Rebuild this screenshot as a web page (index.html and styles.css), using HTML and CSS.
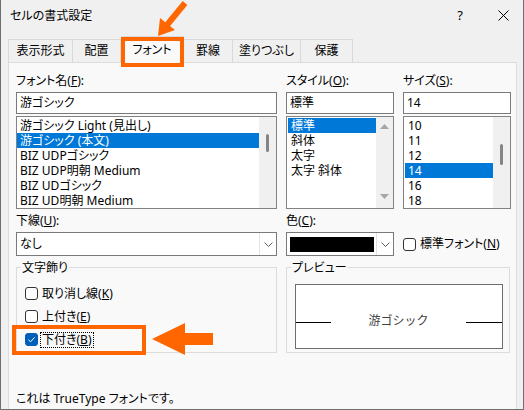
FILE: index.html
```html
<!DOCTYPE html>
<html lang="ja">
<head>
<meta charset="utf-8">
<title>セルの書式設定</title>
<link rel="stylesheet" href="styles.css">
</head>
<body>
<div class="window">
  <div class="titlebar">
    <span class="title">セルの書式設定</span>
    <span class="help">?</span>
    <svg class="close" width="11" height="11" viewBox="0 0 11 11"><path d="M0.5 0.5 L10.5 10.5 M10.5 0.5 L0.5 10.5" stroke="#000" stroke-width="1" fill="none"/></svg>
  </div>
  <div class="tabs">
    <div class="tab w1">表示形式</div>
    <div class="tab w2">配置</div>
    <div class="tab tab-active w3">フォント</div>
    <div class="tab w4">罫線</div>
    <div class="tab w5">塗りつぶし</div>
    <div class="tab w6">保護</div>
  </div>
  <div class="panel">
    <div class="row-top">
      <div class="field">
        <div class="label">フォント名(<u>F</u>):</div>
        <div class="textbox">游ゴシック</div>
        <div class="listbox">
          <div class="items items-font">
            <div class="item">游ゴシック Light (見出し)</div>
            <div class="item sel">游ゴシック (本文)</div>
            <div class="item">BIZ UDPゴシック</div>
            <div class="item">BIZ UDP明朝 Medium</div>
            <div class="item">BIZ UDゴシック</div>
            <div class="item">BIZ UD明朝 Medium</div>
          </div>
          <div class="vscroll"><div class="thumb thumb-font"></div></div>
        </div>
      </div>
      <div class="field">
        <div class="label">スタイル(<u>O</u>):</div>
        <div class="textbox">標準</div>
        <div class="listbox">
          <div class="items">
            <div class="item sel">標準</div>
            <div class="item">斜体</div>
            <div class="item">太字</div>
            <div class="item">太字 斜体</div>
          </div>
          <div class="vscroll arrows">
            <svg width="9" height="5" viewBox="0 0 9 5"><path d="M0 5 L4.5 0 L9 5 Z" fill="#a6a6a6"/></svg>
            <svg width="9" height="5" viewBox="0 0 9 5"><path d="M0 0 L4.5 5 L9 0 Z" fill="#a6a6a6"/></svg>
          </div>
        </div>
      </div>
      <div class="field">
        <div class="label">サイズ(<u>S</u>):</div>
        <div class="textbox">14</div>
        <div class="listbox">
          <div class="items">
            <div class="item">10</div>
            <div class="item">11</div>
            <div class="item">12</div>
            <div class="item sel">14</div>
            <div class="item">16</div>
            <div class="item">18</div>
          </div>
          <div class="vscroll"><div class="thumb thumb-size"></div></div>
        </div>
      </div>
    </div>

    <div class="row-mid">
      <div class="field">
        <div class="label">下線(<u>U</u>):</div>
        <div class="combo">
          <div class="combo-text">なし</div>
          <div class="combo-btn"><svg width="9" height="5" viewBox="0 0 9 5"><path d="M0.5 0.5 L4.5 4.5 L8.5 0.5" stroke="#606060" stroke-width="1" fill="none"/></svg></div>
        </div>
      </div>
      <div class="field">
        <div class="label">色(<u>C</u>):</div>
        <div class="combo">
          <div class="swatch"></div>
          <div class="combo-btn"><svg width="9" height="5" viewBox="0 0 9 5"><path d="M0.5 0.5 L4.5 4.5 L8.5 0.5" stroke="#606060" stroke-width="1" fill="none"/></svg></div>
        </div>
      </div>
      <div class="cb-row std">
        <span class="cb"></span>
        <span class="cb-label">標準フォント(<u>N</u>)</span>
      </div>
    </div>

    <div class="row-groups">
      <fieldset class="group">
        <legend>文字飾り</legend>
        <div class="cb-row first">
          <span class="cb"></span>
          <span class="cb-label">取り消し線(<u>K</u>)</span>
        </div>
        <div class="cb-row">
          <span class="cb"></span>
          <span class="cb-label">上付き(<u>E</u>)</span>
        </div>
        <div class="cb-row">
          <span class="cb on"><svg width="11" height="11" viewBox="0 0 11 11"><path d="M2.5 5.8 L4.6 7.8 L8.6 3.3" stroke="#fff" stroke-width="1" fill="none"/></svg></span>
          <span class="cb-label focus">下付き(<u>B</u>)</span>
        </div>
      </fieldset>
      <fieldset class="group group-preview">
        <legend>プレビュー</legend>
        <div class="preview">
          <span class="pv-line"></span>
          <span class="pv-text">游ゴシック</span>
          <span class="pv-line"></span>
        </div>
      </fieldset>
    </div>

    <p class="note">これは TrueType フォントです。</p>
  </div>

  <svg class="annot" width="524" height="410" viewBox="0 0 524 410">
    <rect x="123" y="39" width="59" height="26" fill="none" stroke="#ff6600" stroke-width="4"/>
    <rect x="14" y="327" width="130" height="26" fill="none" stroke="#ff6600" stroke-width="4"/>
    <line x1="185" y1="3" x2="167" y2="25" stroke="#ff6600" stroke-width="6"/>
    <polygon points="158,36 175,30 160,18" fill="#ff6600"/>
    <polygon points="152,339 185,323 185,333 213,333 213,345 185,345 185,355" fill="#ff6600"/>
  </svg>
</div>
</body>
</html>
```

FILE: styles.css
```css
* { box-sizing: border-box; }
html, body { margin: 0; padding: 0; }
body {
  width: 524px;
  height: 410px;
  overflow: hidden;
  background: #f0f0f0;
  font-family: "Noto Sans", "Noto Sans CJK JP", sans-serif;
  font-size: 12px;
  color: #000;
  font-feature-settings: "palt";
}
u { text-decoration: underline; text-underline-offset: 1px; }

.window {
  position: relative;
  width: 524px;
  height: 410px;
  background: #f0f0f0;
  border: 1px solid #6f6f6f;
  border-top: none;
  display: flex;
  flex-direction: column;
  overflow: hidden;
}

.titlebar {
  height: 30px;
  flex: none;
  display: flex;
  align-items: center;
  padding-left: 9px;
  padding-right: 14px;
}
.title { flex: 1; line-height: 15px; }
.help { font-size: 13px; line-height: 15px; margin-right: 35px; font-feature-settings: normal; }
.close { display: block; }

.tabs {
  flex: none;
  height: 23px;
  margin-top: 9px;
  padding-left: 7px;
  display: flex;
  align-items: flex-end;
  position: relative;
  z-index: 1;
}
.tab {
  height: 23px;
  border: 1px solid #d9d9d9;
  border-left: none;
  border-bottom: none;
  text-align: center;
  line-height: 22px;
  background: #f0f0f0;
  white-space: nowrap;
}
.w1 { width: 65px; border-left: 1px solid #d9d9d9; }
.w2 { width: 48px; }
.w3 { width: 63px; }
.w4 { width: 49px; }
.w5 { width: 68px; }
.w6 { width: 52px; }
.tab-active {
  height: 27px;
  margin-bottom: -1px;
  background: #f9f9f9;
  line-height: 26px;
}

.panel {
  flex: 1;
  margin-left: 7px;
  width: 509px;
  background: #f9f9f9;
  border: 1px solid #dcdcdc;
  border-bottom: none;
  padding: 10px 0 0 7px;
}

.row-top, .row-mid {
  display: grid;
  grid-template-columns: 261px 108px 108px;
  column-gap: 9px;
}
.row-mid { margin-top: 4px; align-items: end; }

.label {
  height: 15px;
  line-height: 15px;
  margin-bottom: 4px;
  white-space: nowrap;
}
.textbox {
  height: 22px;
  border: 1px solid #7a7a7a;
  background: #fff;
  padding-left: 3px;
  line-height: 20px;
  margin-bottom: 2px;
  white-space: nowrap;
}
.listbox {
  height: 93px;
  border: 1px solid #828282;
  background: #fff;
  display: flex;
  overflow: hidden;
}
.items { flex: 1; min-width: 0; padding: 1px 0 0 1px; }
.items-font { padding-left: 0; }
.item {
  height: 15px;
  line-height: 15px;
  padding-left: 3px;
  white-space: nowrap;
  overflow: hidden;
}
.item.sel { background: #0078d7; color: #fff; }

.vscroll {
  width: 17px;
  flex: none;
  background: #f0f0f0;
  display: flex;
  flex-direction: column;
  align-items: center;
}
.vscroll.arrows { justify-content: space-between; padding: 7px 0 9px; }
.vscroll svg { display: block; }
.thumb { width: 3px; background: #858585; border-radius: 1.5px; }
.thumb-font { margin-top: 17px; height: 18px; }
.thumb-size { margin-top: 27px; height: 21px; }

.combo {
  height: 24px;
  border: 1px solid #7a7a7a;
  background: #fff;
  display: flex;
}
.combo-text { flex: 1; padding-left: 3px; line-height: 22px; }
.combo-btn {
  width: 17px;
  flex: none;
  border-left: 1px solid #e3e3e3;
  display: flex;
  align-items: center;
  justify-content: center;
}
.combo-btn svg { display: block; }
.swatch {
  flex: 1;
  height: 15px;
  align-self: center;
  margin: 0 2px 0 3px;
  background: #000;
}

.cb-row {
  display: flex;
  align-items: center;
  height: 23px;
  white-space: nowrap;
}
.cb-row.std { height: 24px; }
.cb-row.first { margin-top: 7px; }
.cb {
  width: 13px;
  height: 13px;
  flex: none;
  border: 1px solid #333;
  border-radius: 3px;
  background: #fff;
  display: flex;
  align-items: center;
  justify-content: center;
}
.cb svg { display: block; }
.cb.on { background: #005fb8; border-color: #005fb8; }
.cb-label {
  margin-left: 2px;
  padding: 0 1px;
  border: 1px dotted transparent;
  line-height: 14px;
}
.cb-label.focus { border-color: #000; }

.row-groups {
  display: grid;
  grid-template-columns: 261px 224px;
  column-gap: 9px;
  margin-top: 4px;
}
.group {
  margin: 0;
  min-width: 0;
  border: 1px solid #dcdcdc;
  padding: 0 8px 1px;
}
.group legend {
  padding: 0 1px;
  margin-left: -4px;
  line-height: 15px;
}
.group-preview { padding-right: 6px; }
.preview {
  height: 65px;
  margin-top: 9px;
  border: 1px solid #6e6e6e;
  background: #fff;
  display: flex;
  align-items: center;
  justify-content: space-between;
  padding-top: 7px;
}
.pv-line { width: 35px; height: 1px; background: #000; margin-top: 4px; }
.pv-line:last-child { width: 36px; }
.pv-text {
  font-size: 12px;
  line-height: 15px;
  color: #404040;
  font-feature-settings: normal;
}

.note {
  margin: 38px 0 0;
  line-height: 15px;
  white-space: nowrap;
}

.annot {
  position: absolute;
  left: -1px;
  top: 0;
  z-index: 10;
  pointer-events: none;
}
```
